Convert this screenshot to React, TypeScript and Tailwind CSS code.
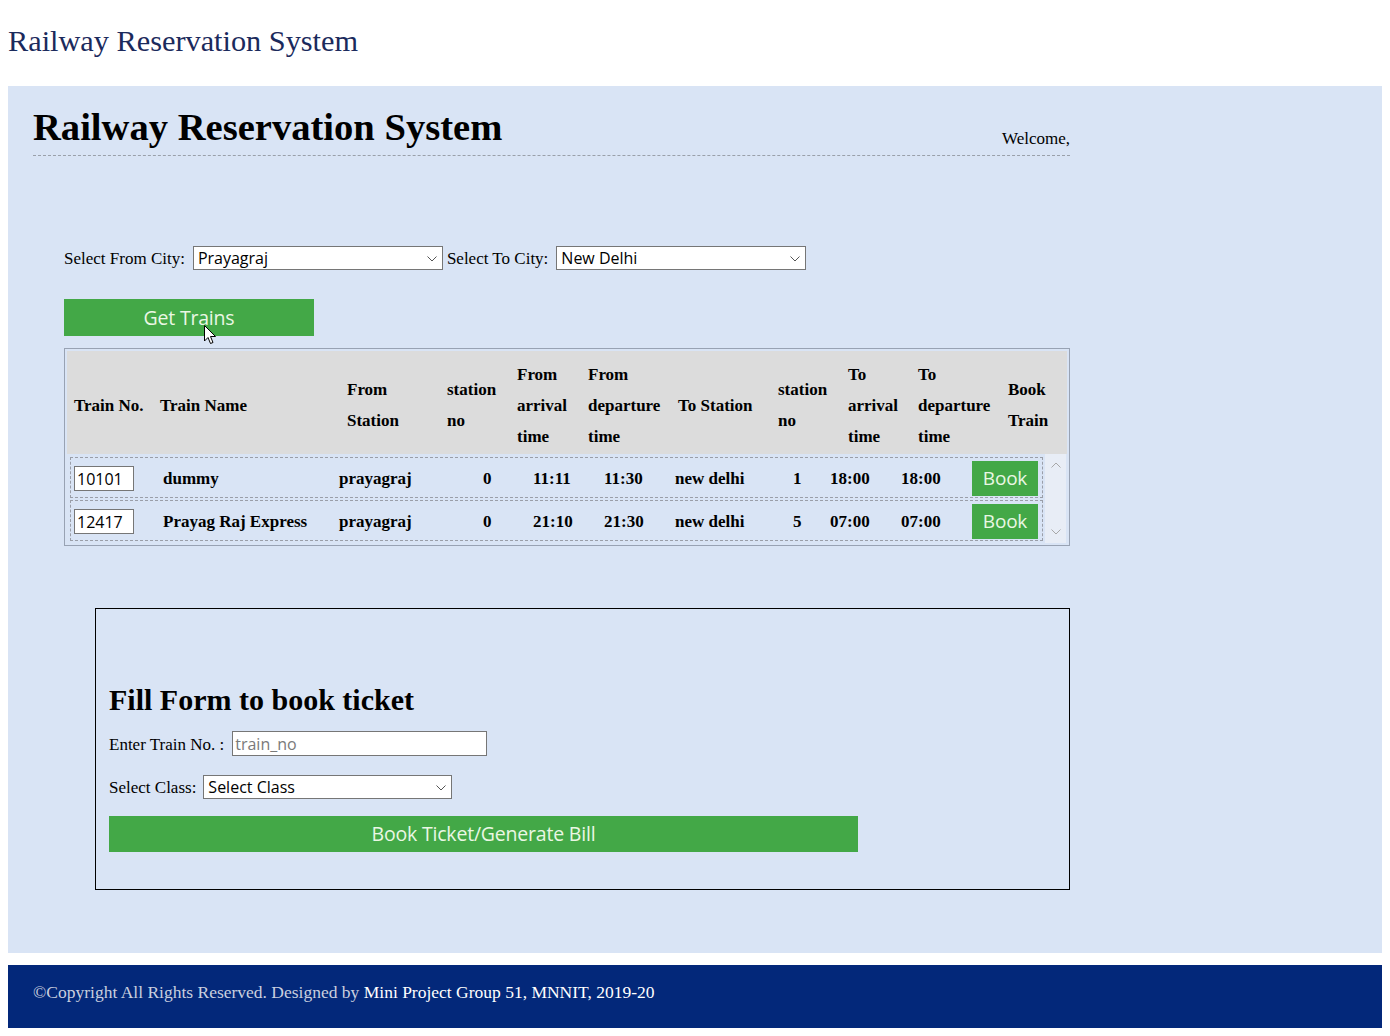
import React from 'react';

const serif = "font-['Liberation_Serif','Times_New_Roman',serif]";
const sans = "font-['Open_Sans','Noto_Sans',sans-serif]";

const headCols = [
  ['Train No.'],
  ['Train Name'],
  ['From', 'Station'],
  ['station', 'no'],
  ['From', 'arrival', 'time'],
  ['From', 'departure', 'time'],
  ['To Station'],
  ['station', 'no'],
  ['To', 'arrival', 'time'],
  ['To', 'departure', 'time'],
  ['Book', 'Train'],
];

const trains = [
  { no: '10101', name: 'dummy', from: 'prayagraj', fromNo: '0', fArr: '11:11', fDep: '11:30', to: 'new delhi', toNo: '1', tArr: '18:00', tDep: '18:00' },
  { no: '12417', name: 'Prayag Raj Express', from: 'prayagraj', fromNo: '0', fArr: '21:10', fDep: '21:30', to: 'new delhi', toNo: '5', tArr: '07:00', tDep: '07:00' },
];

function Chevron({ className = '' }: { className?: string }) {
  return (
    <svg width="10" height="6" viewBox="0 0 10 6" className={className}>
      <path d="M0.5 0.5 L5 5 L9.5 0.5" fill="none" stroke="currentColor" strokeWidth="1" />
    </svg>
  );
}

function FakeSelect({ value, width }: { value: string; width: string }) {
  return (
    <div className={`relative ${width} h-[24px] bg-white border border-[#767676] flex items-center pl-[4px] ${sans} text-[16px] text-black`}>
      <span className="leading-none">{value}</span>
      <Chevron className="absolute right-[5px] top-[9px] text-[#555]" />
    </div>
  );
}

function Cursor() {
  return (
    <svg width="13" height="20" viewBox="0 0 13 20" className="absolute left-[140px] top-[26px]">
      <path d="M0.5 0.5 L0.5 16 L4 12.5 L6.5 18.5 L9 17.5 L6.5 11.5 L11.5 11.5 Z" fill="white" stroke="black" strokeWidth="1" strokeLinejoin="round" />
    </svg>
  );
}

export default function App() {
  return (
    <div className={`min-h-[1036px] bg-white ${serif} text-black`}>
      <div className="px-2 h-[86px] flex items-center pb-[4px]">
        <div className="text-[30.3px] text-[#1b2a5c] leading-none">Railway Reservation System</div>
      </div>

      <div className="mx-2 bg-[#d9e4f5] px-[25px] pt-[19px] h-[867px]">
        <div className="w-[1037px]">
          <div className="flex justify-between items-end border-b border-dashed border-[#9aa0aa] pb-[6px]">
            <h1 className="text-[38.6px] font-bold leading-[44px]">Railway Reservation System</h1>
            <span className="text-[17px] leading-[20px]">Welcome,</span>
          </div>

          <div className="ml-[31px] mt-[90px] flex items-center text-[17px] h-[24px]">
            <span className="mr-[8px] pt-[2px]">Select From City:</span>
            <FakeSelect value="Prayagraj" width="w-[250px]" />
            <span className="ml-[4px] mr-[8px] pt-[2px]">Select To City:</span>
            <FakeSelect value="New Delhi" width="w-[250px]" />
          </div>

          <button className={`relative ml-[31px] mt-[29px] w-[250px] h-[37px] bg-[#43a847] text-[#eaf7e4] text-[19.5px] tracking-[-0.2px] ${sans} block`}>
            Get Trains
            <Cursor />
          </button>

          <div className="ml-[31px] mt-[12px] w-[1006px] h-[198px] border border-[#98a2b3] p-[2px]">
            <div className="bg-[#dcdcdc] h-[103px] pl-[7px] pt-[5px] grid grid-cols-[86px_187px_100px_70px_71px_90px_100px_70px_70px_90px_1fr] items-center text-[17px] font-bold leading-[31px]">
              {headCols.map((lines, i) => (
                <div key={i}>
                  {lines.map((l, j) => (
                    <div key={j}>{l}</div>
                  ))}
                </div>
              ))}
            </div>
            <div className="flex h-[89px]">
              <div className="pl-[3px] pt-[3px] flex flex-col gap-[2px]">
                {trains.map(t => (
                  <div key={t.no} className="w-[973px] h-[41px] border border-dashed border-[#9a9ea8] pl-[3px] pt-[2px] grid grid-cols-[89px_176px_144px_50px_71px_71px_118px_37px_71px_71px_66px] items-center text-[17px] font-bold">
                    <div className={`w-[60px] h-[25px] bg-white border border-[#767676] ${sans} font-normal text-[16px] pl-[2px] flex items-center`}>{t.no}</div>
                    <div>{t.name}</div>
                    <div>{t.from}</div>
                    <div>{t.fromNo}</div>
                    <div>{t.fArr}</div>
                    <div>{t.fDep}</div>
                    <div>{t.to}</div>
                    <div>{t.toNo}</div>
                    <div>{t.tArr}</div>
                    <div>{t.tDep}</div>
                    <button className={`w-[66px] h-[35px] bg-[#43a847] text-[#eaf7e4] text-[19px] tracking-[-0.2px] ${sans} font-normal`}>Book</button>
                  </div>
                ))}
              </div>
              <div className="ml-[2px] w-[21px] bg-[#e8edf6] flex flex-col justify-between items-center py-[8px]">
                <Chevron className="rotate-180 text-[#a8a8a8]" />
                <Chevron className="text-[#a8a8a8]" />
              </div>
            </div>
          </div>

          <div className="ml-[62px] mt-[62px] w-[975px] h-[282px] border border-black pl-[13px] pt-[73px]">
            <h2 className="text-[30px] font-bold leading-[36px]">Fill Form to book ticket</h2>
            <div className="mt-[13px] flex items-center text-[17px] h-[25px]">
              <span className="mr-[8px] pt-[2px]">Enter Train No. :</span>
              <div className={`w-[255px] h-[25px] bg-white border border-[#767676] ${sans} text-[16px] text-[#7a7a7a] pl-[2px] flex items-center`}>train_no</div>
            </div>
            <div className="mt-[19px] flex items-center text-[17px] h-[24px]">
              <span className="mr-[7px] pt-[2px]">Select Class:</span>
              <FakeSelect value="Select Class" width="w-[249px]" />
            </div>
            <button className={`mt-[17px] w-[749px] h-[36px] bg-[#43a847] text-[#eaf7e4] text-[19.5px] tracking-[-0.2px] ${sans} block`}>
              Book Ticket/Generate Bill
            </button>
          </div>
        </div>
      </div>

      <div className="mx-2 mt-[12px] h-[63px] bg-[#03287a] pl-[25px] pb-[8px] flex items-center text-[17.5px]">
        <span className="text-[#c9cfdf]">©Copyright All Rights Reserved. Designed by </span>
        <span className="text-white">&nbsp;Mini Project Group 51, MNNIT, 2019-20</span>
      </div>
    </div>
  );
}
